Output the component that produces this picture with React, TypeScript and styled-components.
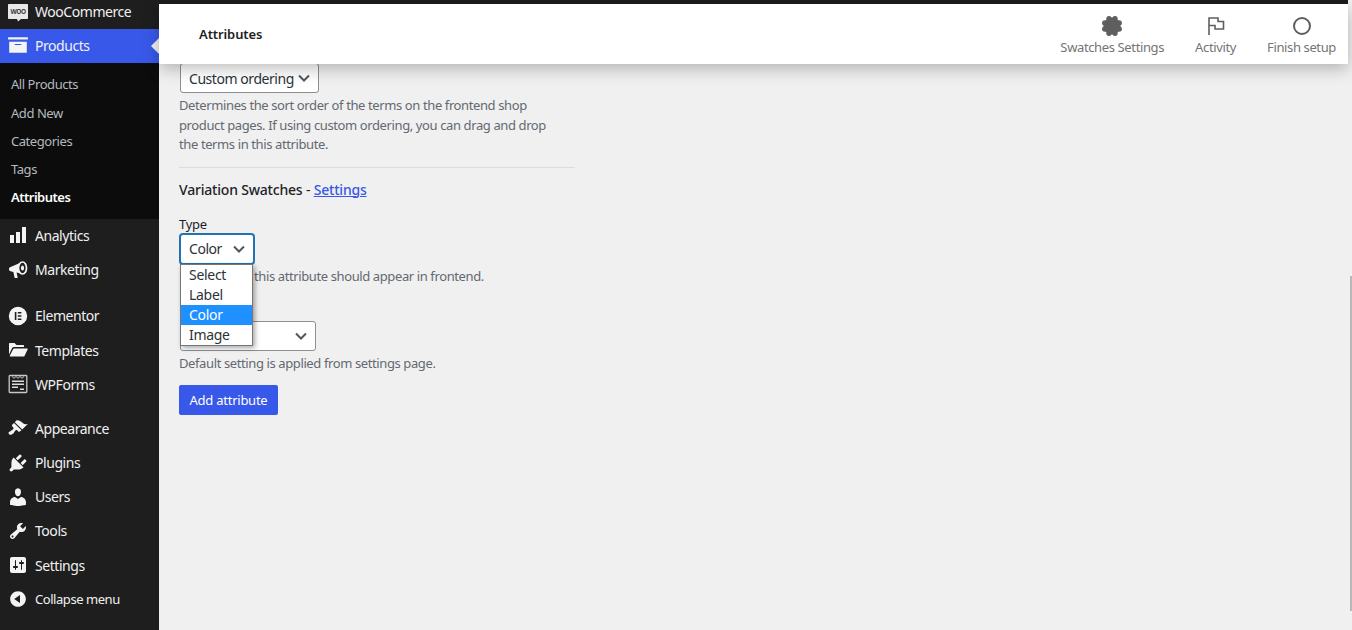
import React from "react";
import styled, {createGlobalStyle} from "styled-components";

const FONT = `"Noto Sans", "Open Sans", "Liberation Sans", sans-serif`;

const GlobalStyle = createGlobalStyle`
    html, body {
        margin: 0;
        padding: 0;
        height: 630px;
        overflow: hidden;
        background: #f0f0f1;
        font-family: ${FONT};
    }
    * {
        box-sizing: border-box;
    }
`;

const ArchiveIcon = () => (
    <svg width="22" height="22" viewBox="0 0 20 20" fill="currentColor">
        <path d="M19 3v2H1V3h18zM2 7h16v10H2V7zm11 3V9H7v1h6z" />
    </svg>
);

const WooIcon = () => (
    <svg width="22" height="22" viewBox="0 -5 22 22">
        <path d="M2 -1h18c.6 0 1 .4 1 1v13c0 .6-.4 1-1 1h-6l-3 2.500-1-2.500H2c-.6 0-1-.4-1-1V0c0-.6.4-1 1-1z" fill="#e8e8e8" />
        <text x="11" y="8.500" fontSize="6.500" fontWeight="700" fontFamily={FONT} textAnchor="middle" fill="#3c3c3c">WOO</text>
    </svg>
);

const BarsIcon = () => (
    <svg width="20" height="20" viewBox="0 0 20 20" fill="currentColor">
        <path d="M18 18V2h-4v16h4zm-6 0V7H8v11h4zm-6 0v-8H2v8h4z" />
    </svg>
);

const MegaphoneIcon = () => (
    <svg width="20" height="20" viewBox="0 0 20 20">
        <path d="M1 9c0-1 .6-1.6 1.6-2L13 2.500c-1.600 2-2.400 4-2.400 6s.8 3.600 2.200 5L8.600 12.600l1 4.600c.1.600-.3.900-.8.900H7.400c-.5 0-.8-.2-.9-.7l-1.100-5.500-2.800-.7C1.600 11 1 10.400 1 9.500z" fill="currentColor" />
        <ellipse cx="14.500" cy="8" rx="4" ry="6" fill="none" stroke="currentColor" strokeWidth="1.700" />
        <ellipse cx="14.500" cy="8" rx="1.600" ry="2.500" fill="currentColor" />
    </svg>
);

const ElementorIcon = () => (
    <svg width="20" height="20" viewBox="0 0 20 20">
        <path fillRule="evenodd" fill="currentColor" d="M10 .8a9.200 9.200 0 1 1 0 18.400A9.200 9.200 0 0 1 10 .8zM6.800 6v8h1.600V6H6.800zm3 0v1.600h3.600V6H9.800zm0 3.200v1.600h3.600V9.200H9.800zm0 3.200V14h3.600v-1.600H9.800z" />
    </svg>
);

const FolderIcon = () => (
    <svg width="20" height="20" viewBox="0 0 20 20" fill="currentColor">
        <path d="M1 14.500V4c0-.6.4-1 1-1h4.500l2 2H15c.6 0 1 .4 1 1v1H6c-.9 0-1.500.4-2 1.200L1 14.500z" />
        <path d="M6.200 8.500H19c.6 0 .9.500.6 1L16.500 16c-.2.400-.6.600-1 .6H2.400c-.5 0-.8-.5-.6-.9l3.300-6.500c.2-.4.600-.7 1.100-.7z" />
    </svg>
);

const FormsIcon = () => (
    <svg width="20" height="20" viewBox="0 0 20 20">
        <path d="M2 1.500h16c.500 0 .800.300.800.800v15.400c0 .500-.300.800-.800.800H2c-.500 0-.800-.300-.800-.800V2.300c0-.500.300-.800.800-.800z" fill="none" stroke="#c8c8c8" strokeWidth="1.300" />
        <path d="M4 2.500l2 1.800 2-1.800 2 1.800 2-1.800 2 1.800 2-1.800" fill="none" stroke="#c8c8c8" strokeWidth="1" />
        <path d="M4 6.500h12v1.500H4zM4 9.500h12V11H4zM4 12.500h6V14H4zM12 14.500h4V16h-4z" fill="#dcdcdc" />
    </svg>
);

const BrushIcon = () => (
    <svg width="21" height="21" viewBox="0 0 20 20" fill="currentColor">
        <path d="M14.480 11.060L7.410 3.990l1.500-1.500c.500-.560 2.300-.470 3.510.320 1.210.800 1.430 1.280 2.910 2.100 1.180.640 2.450 1.260 4.450.850zm-.710.710L6.700 4.700 4.930 6.470c-.390.390-.390 1.020 0 1.410l1.060 1.060c.390.390.390 1.030 0 1.420-.600.600-1.430 1.110-2.210 1.690-.350.260-.700.530-1.010.840C1.430 13.250.990 14.400 2 15.400c1 1 2.400.650 3.740-.450.310-.310.580-.660.840-1.010.580-.780 1.090-1.610 1.690-2.210.390-.390 1.020-.390 1.410 0l1.060 1.060c.390.390 1.020.390 1.410 0z" />
    </svg>
);

const PlugIcon = () => (
    <svg width="22" height="22" viewBox="0 0 20 20" fill="currentColor">
        <path d="M13.110 4.360L9.870 7.600 8 5.730l3.240-3.240c.350-.340 1.050-.200 1.560.320.520.510.660 1.210.310 1.550zm-8 1.770l.910-1.120 9.010 9.010-1.190.840c-.710.710-2.630 1.160-3.820 1.160H6.140L4.900 17.260c-.590.590-1.540.590-2.120 0-.590-.580-.590-1.530 0-2.120l1.240-1.240v-3.880c0-1.130.400-3.190 1.090-3.890zm7.260 3.970l3.240-3.240c.340-.350 1.040-.210 1.550.310.520.510.660 1.210.31 1.550l-3.240 3.250z" />
    </svg>
);

const UserIcon = () => (
    <svg width="22" height="22" viewBox="0 0 20 20" fill="currentColor">
        <path d="M10 9.250c-2.270 0-2.730-3.440-2.730-3.440C7 4.020 7.820 2 9.970 2c2.160 0 2.980 2.020 2.710 3.810 0 0-.410 3.440-2.680 3.440zm0 2.570L12.720 10c2.390 0 4.520 2.330 4.520 4.530v2.490s-3.650 1.130-7.240 1.130c-3.650 0-7.240-1.130-7.240-1.130v-2.490c0-2.250 1.940-4.480 4.470-4.480z" />
    </svg>
);

const WrenchIcon = () => (
    <svg width="20" height="20" viewBox="0 0 20 20" fill="currentColor">
        <path d="M16.680 9.770c-1.340 1.340-3.300 1.670-4.950.990l-5.410 6.520c-.990.990-2.590.990-3.580 0s-.990-2.590 0-3.570l6.520-5.420c-.680-1.650-.350-3.610.990-4.950 1.280-1.280 3.120-1.620 4.720-1.060l-2.890 2.890 2.820 2.820 2.860-2.870c.530 1.580.180 3.390-1.080 4.650zM3.810 16.210c.400.390 1.040.390 1.430 0 .400-.400.400-1.040 0-1.430-.390-.400-1.030-.400-1.430 0-.390.390-.390 1.030 0 1.430z" />
    </svg>
);

const SlidersIcon = () => (
    <svg width="20" height="20" viewBox="0 0 20 20" fill="currentColor">
        <path d="M18 16V4c0-1.100-.900-2-2-2H4c-1.100 0-2 .900-2 2v12c0 1.100.900 2 2 2h12c1.100 0 2-.900 2-2zM8 11h1c.550 0 1 .450 1 1s-.450 1-1 1H8v1.500c0 .280-.220.500-.500.500s-.500-.220-.500-.500V13H6c-.550 0-1-.450-1-1s.450-1 1-1h1V5.500c0-.280.220-.500.500-.500s.500.220.500.500V11zm5-2h-1c-.550 0-1-.450-1-1s.450-1 1-1h1V5.500c0-.280.220-.500.500-.500s.500.220.500.500V7h1c.550 0 1 .450 1 1s-.450 1-1 1h-1v5.500c0 .280-.220.500-.500.500s-.500-.220-.500-.500V9z" />
    </svg>
);

const CollapseIcon = () => (
    <svg width="20" height="20" viewBox="0 0 20 20" fill="currentColor">
        <path d="M10 2.160c4.330 0 7.840 3.510 7.840 7.840s-3.510 7.840-7.840 7.840S2.160 14.330 2.160 10 5.710 2.160 10 2.160zm2 11.720V6.120L6.180 9.970z" />
    </svg>
);

const GearIcon = () => (
    <svg width="24" height="24" viewBox="0 0 24 24" fill="#5f5f5f">
        <circle cx="12" cy="12" r="8.500" />
        {[0, 45, 90, 135, 180, 225, 270, 315].map(angle => (
            <circle
                key={angle}
                cx={12 + 7.800 * Math.cos(((angle + 22.500) * Math.PI) / 180)}
                cy={12 + 7.800 * Math.sin(((angle + 22.500) * Math.PI) / 180)}
                r="2.700"
            />
        ))}
    </svg>
);

const FlagIcon = () => (
    <svg width="24" height="24" viewBox="0 0 24 24" fill="none" stroke="#5f5f5f" strokeWidth="1.600">
        <path d="M5 21V4h9v3.500h5.500v7.500H11v-3.500H5" />
    </svg>
);

const CircleIcon = () => (
    <svg width="24" height="24" viewBox="0 0 24 24" fill="none" stroke="#5f5f5f" strokeWidth="2">
        <circle cx="12" cy="12" r="8" />
    </svg>
);

const Chevron = () => (
    <svg width="16" height="16" viewBox="0 0 16 16" fill="none" stroke="#50575e" strokeWidth="2">
        <path d="M3 5.500L8 10.500l5-5" />
    </svg>
);

const Page = styled.div`
    display: flex;
    width: 1352px;
    height: 630px;
    overflow: hidden;
    position: relative;
`;

const Sidebar = styled.nav`
    flex: 0 0 159px;
    background: #1e1e1e;
    height: 630px;
    overflow: hidden;
`;

const MenuRow = styled.div<{ $active?: boolean; $lift?: number; $small?: boolean }>`
    position: relative;
    display: flex;
    align-items: center;
    gap: 6px;
    height: 34.2px;
    padding: 0 0 2px 6px;
    margin-bottom: ${props => props.$lift ?? 0}px;
    font-size: ${props => (props.$small ? 13 : 14)}px;
    letter-spacing: ${props => (props.$small ? -0.45 : -0.45)}px;
    color: #f0f0f1;
    background: ${props => (props.$active ? "#3858e9" : "transparent")};

    ${props => props.$active && `
        &::after {
            content: "";
            position: absolute;
            right: 0;
            top: 50%;
            margin-top: -8px;
            border: 8px solid transparent;
            border-left-width: 0;
            border-right-color: #f0f0f1;
        }
    `}
`;

const IconSlot = styled.span`
    display: flex;
    align-items: center;
    justify-content: center;
    width: 23px;
    height: 22px;
    flex: none;
    color: #f4f4f4;
`;

const SubMenu = styled.div`
    background: #0c0c0c;
    padding: 7px 0 8px;
    height: 156px;
`;

const SubItem = styled.div<{ $current?: boolean }>`
    height: 28.2px;
    line-height: 28.2px;
    padding-left: 11px;
    font-size: 13px;
    letter-spacing: ${props => (props.$current ? -0.5 : -0.45)}px;
    color: ${props => (props.$current ? "#fff" : "#b4b9be")};
    font-weight: ${props => (props.$current ? 600 : 400)};
`;

const WooRow = styled(MenuRow)`
    margin-top: -5px;
`;

const Main = styled.main`
    flex: 1;
    position: relative;
    padding: 63px 0 0 20px;
`;

const TopStrip = styled.div`
    position: absolute;
    top: 0;
    left: 0;
    right: 4px;
    height: 4px;
    background: #1a1a1a;
    z-index: 3;
`;

const Header = styled.header`
    position: absolute;
    top: 4px;
    left: 0;
    right: 4px;
    height: 60px;
    display: flex;
    align-items: center;
    justify-content: space-between;
    background: #fff;
    padding: 0 12px 0 40px;
    box-shadow: 0 5px 15px rgba(0, 0, 0, 0.25);
    z-index: 2;
`;

const HeaderTitle = styled.h1`
    margin: 0 0 1px;
    font-size: 13px;
    font-weight: 600;
    letter-spacing: -0.1px;
    color: #1e1e1e;
`;

const HeaderActions = styled.div`
    display: flex;
    gap: 31px;
`;

const HeaderAction = styled.div`
    display: flex;
    flex-direction: column;
    align-items: center;
    padding-top: 2px;
    font-size: 13px;
    letter-spacing: -0.37px;
    line-height: 18px;
    color: #757575;
`;

const Form = styled.div`
    width: 396px;
`;

const Select = styled.div<{ $width: number; $focused?: boolean }>`
    display: flex;
    align-items: center;
    justify-content: space-between;
    width: ${props => props.$width}px;
    height: 30px;
    margin-left: 1px;
    padding: 0 6px 0 8px;
    border: 1px solid ${props => (props.$focused ? "#2271b1" : "#8c8f94")};
    border-radius: 3px;
    box-shadow: ${props => (props.$focused ? "0 0 0 1px #2271b1" : "none")};
    background: #fff;
    font-size: 14px;
    letter-spacing: -0.45px;
    color: #2c3338;
`;

const BlankSelect = styled(Select)`
    justify-content: flex-end;
`;

const Hint = styled.p<{ $indent?: number }>`
    margin: 3px 0 0 ${props => props.$indent ?? 0}px;
    font-size: 13px;
    line-height: 19.5px;
    letter-spacing: -0.39px;
    color: #646970;
`;

const Divider = styled.hr`
    margin: 12px 0 12px;
    border: none;
    border-top: 1px solid #dcdcde;
`;

const SectionTitle = styled.h2`
    margin: 0;
    font-size: 14px;
    line-height: 20px;
    font-weight: 500;
    letter-spacing: -0.2px;
    color: #1d2327;

    span {
        font-weight: 400;
    }
    a {
        color: #3858e9;
        text-decoration: underline;
    }
`;

const FieldLabel = styled.label`
    display: block;
    margin-top: 14px;
    font-size: 13px;
    line-height: 20px;
    letter-spacing: -0.3px;
    color: #1e1e1e;
`;

const TypeField = styled.div`
    position: relative;
`;

const Options = styled.ul`
    position: absolute;
    top: 30px;
    left: 1px;
    width: 73px;
    margin: 0;
    padding: 0;
    list-style: none;
    background: #fff;
    border: 1px solid #767676;
    box-shadow: 2px 2px 5px rgba(0, 0, 0, 0.35);
    z-index: 1;
`;

const Option = styled.li<{ $selected?: boolean }>`
    height: 20px;
    line-height: 20px;
    padding-left: 8px;
    font-size: 14px;
    letter-spacing: -0.3px;
    color: ${props => (props.$selected ? "#fff" : "#2c3338")};
    background: ${props => (props.$selected ? "#1e90ff" : "transparent")};
`;

// label of the second field sits fully behind the open dropdown
const SecondField = styled.div`
    margin-top: 35px;
`;

const AddButton = styled.button`
    display: block;
    width: 99px;
    height: 30px;
    margin-top: 11px;
    padding: 0;
    border: none;
    border-radius: 2px;
    background: #3858e9;
    color: #fff;
    font-family: inherit;
    font-size: 13px;
    letter-spacing: -0.25px;
`;

const ScrollThumb = styled.div`
    position: absolute;
    right: 0;
    top: 276px;
    width: 2px;
    height: 335px;
    background: #b8b8b8;
`;

const App: React.FC = () => {
    return (
        <Page>
            <GlobalStyle />
            <Sidebar>
                <WooRow><IconSlot><WooIcon /></IconSlot>WooCommerce</WooRow>
                <MenuRow $active><IconSlot><ArchiveIcon /></IconSlot>Products</MenuRow>
                <SubMenu>
                    <SubItem>All Products</SubItem>
                    <SubItem>Add New</SubItem>
                    <SubItem>Categories</SubItem>
                    <SubItem>Tags</SubItem>
                    <SubItem $current>Attributes</SubItem>
                </SubMenu>
                <MenuRow><IconSlot><BarsIcon /></IconSlot>Analytics</MenuRow>
                <MenuRow $lift={12}><IconSlot><MegaphoneIcon /></IconSlot>Marketing</MenuRow>
                <MenuRow><IconSlot><ElementorIcon /></IconSlot>Elementor</MenuRow>
                <MenuRow><IconSlot><FolderIcon /></IconSlot>Templates</MenuRow>
                <MenuRow $lift={10}><IconSlot><FormsIcon /></IconSlot>WPForms</MenuRow>
                <MenuRow><IconSlot><BrushIcon /></IconSlot>Appearance</MenuRow>
                <MenuRow><IconSlot><PlugIcon /></IconSlot>Plugins</MenuRow>
                <MenuRow><IconSlot><UserIcon /></IconSlot>Users</MenuRow>
                <MenuRow><IconSlot><WrenchIcon /></IconSlot>Tools</MenuRow>
                <MenuRow><IconSlot><SlidersIcon /></IconSlot>Settings</MenuRow>
                <MenuRow $small><IconSlot><CollapseIcon /></IconSlot>Collapse menu</MenuRow>
            </Sidebar>
            <Main>
                <TopStrip />
                <Header>
                    <HeaderTitle>Attributes</HeaderTitle>
                    <HeaderActions>
                        <HeaderAction><GearIcon />Swatches Settings</HeaderAction>
                        <HeaderAction><FlagIcon />Activity</HeaderAction>
                        <HeaderAction><CircleIcon />Finish setup</HeaderAction>
                    </HeaderActions>
                </Header>
                <Form>
                    <Select $width={139}>Custom ordering<Chevron /></Select>
                    <Hint>
                        Determines the sort order of the terms on the frontend shop
                        <br />
                        product pages. If using custom ordering, you can drag and drop
                        <br />
                        the terms in this attribute.
                    </Hint>
                    <Divider />
                    <SectionTitle>
                        Variation Swatches <span>-</span> <a href="#settings">Settings</a>
                    </SectionTitle>
                    <FieldLabel>Type</FieldLabel>
                    <TypeField>
                        <Select $width={74} $focused>Color<Chevron /></Select>
                        <Options>
                            <Option>Select</Option>
                            <Option>Label</Option>
                            <Option $selected>Color</Option>
                            <Option>Image</Option>
                        </Options>
                    </TypeField>
                    <Hint $indent={75}>this attribute should appear in frontend.</Hint>
                    <SecondField>
                        <BlankSelect $width={136}><Chevron /></BlankSelect>
                    </SecondField>
                    <Hint>Default setting is applied from settings page.</Hint>
                    <AddButton>Add attribute</AddButton>
                </Form>
                <ScrollThumb />
            </Main>
        </Page>
    );
};

export default App;
